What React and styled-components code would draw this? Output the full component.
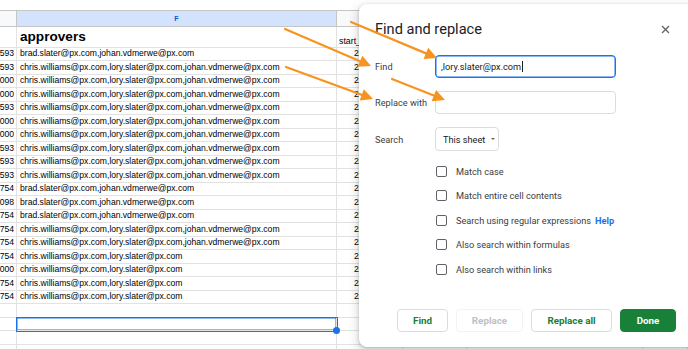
import styled, { createGlobalStyle } from "styled-components";

const GlobalStyle = createGlobalStyle`
  html, body { margin: 0; padding: 0; background: #fff; }
  body { width: 688px; height: 349px; overflow: hidden; }
  * { box-sizing: border-box; }
`;

const Page = styled.div`
  position: relative;
  width: 688px;
  height: 349px;
  overflow: hidden;
  background: #fff;
`;

/* ---------- spreadsheet ---------- */

const Sheet = styled.div`
  display: flex;
  flex-direction: column;
  font-family: "Liberation Sans", Arial, sans-serif;
  color: #000;
`;

const TopStrip = styled.div`
  height: 11px;
  border-bottom: 1px solid #c4c7c5;
`;

const Row = styled.div`
  display: grid;
  grid-template-columns: 17px 320px 66px 64px 176px 1fr;
  height: ${(p) => p.$h}px;
  flex: none;
`;

const Cell = styled.div`
  display: flex;
  align-items: ${(p) => (p.$bottom ? "flex-end" : "center")};
  justify-content: ${(p) => (p.$right ? "flex-end" : "flex-start")};
  padding: 0 2px 0 ${(p) => p.$indent || 3}px;
  border-right: 1px solid #e2e2e2;
  border-bottom: 1px solid #e2e2e2;
  overflow: ${(p) => (p.$selected ? "visible" : "hidden")};
  white-space: nowrap;
  font-size: ${(p) => p.$size || 8.6}px;
  font-weight: ${(p) => (p.$bold ? 700 : 400)};
  line-height: 1;
  position: relative;
  ${(p) => p.$selected && "box-shadow: 0 0 0 1px #1a73e8, inset 0 0 0 0.5px #1a73e8; z-index: 1;"}
`;

const HeadCell = styled.div`
  display: flex;
  align-items: center;
  justify-content: center;
  background: ${(p) => (p.$active ? "#d3e3fd" : "#f8f9fa")};
  border-right: 1px solid #c4c7c5;
  border-bottom: 1px solid #c4c7c5;
  font-size: 7px;
  font-weight: 700;
  color: ${(p) => (p.$active ? "#0b57d0" : "#444")};
`;

const FillHandle = styled.span`
  position: absolute;
  right: -4px;
  bottom: -4px;
  width: 7px;
  height: 7px;
  border-radius: 50%;
  background: #1a73e8;
`;

/* ---------- dialog ---------- */

const Dialog = styled.div`
  position: absolute;
  left: 359px;
  top: 4px;
  width: 345px;
  height: 343px;
  background: #fff;
  border-radius: 8px;
  box-shadow: 0 1px 3px rgba(60, 64, 67, 0.3), 0 4px 8px 3px rgba(60, 64, 67, 0.15);
  padding: 16px 0 0 16px;
  font-family: Roboto, "Liberation Sans", sans-serif;
  color: #3c4043;
  display: flex;
  flex-direction: column;
`;

const Header = styled.div`
  display: flex;
  align-items: center;
  justify-content: space-between;
  width: 300px;
  height: 18px;
`;

const Title = styled.h2`
  margin: 0;
  font-size: 14.6px;
  font-weight: 400;
  color: #202124;
  line-height: 18px;
`;

const Close = styled.button`
  width: 20px;
  height: 20px;
  border: 0;
  padding: 0;
  background: none;
  display: flex;
  align-items: center;
  justify-content: center;
`;

const Form = styled.div`
  display: grid;
  grid-template-columns: 60px 181px;
  row-gap: 13px;
  margin-top: 17px;
  align-items: center;
`;

const Label = styled.label`
  font-size: 9.2px;
  color: #3c4043;
`;

const Input = styled.div`
  height: 23px;
  border: 1px solid ${(p) => (p.$focused ? "#1a73e8" : "#dadce0")};
  border-radius: 4px;
  ${(p) => p.$focused && "box-shadow: inset 0 0 0 0.5px #1a73e8;"}
  display: flex;
  align-items: center;
  padding-left: 5px;
  font-size: 9.2px;
  color: #202124;
`;

const Caret = styled.span`
  display: inline-block;
  width: 1px;
  height: 11px;
  background: #202124;
  margin-left: 1px;
`;

const Select = styled.div`
  width: 64px;
  height: 24px;
  border: 1px solid #dadce0;
  border-radius: 4px;
  display: flex;
  align-items: center;
  padding-left: 7px;
  gap: 6px;
  font-size: 9.2px;
  color: #202124;
`;

const Arrow = styled.span`
  width: 0;
  height: 0;
  border-left: 2.5px solid transparent;
  border-right: 2.5px solid transparent;
  border-top: 2.5px solid #5f6368;
`;

const Options = styled.div`
  display: flex;
  flex-direction: column;
  margin: 8px 0 0 61px;
`;

const Option = styled.div`
  display: flex;
  align-items: center;
  height: 24.5px;
  gap: 9px;
  font-size: 9.2px;
  color: #3c4043;
`;

const Box = styled.span`
  width: 11px;
  height: 11px;
  border: 1.5px solid #5f6368;
  border-radius: 2px;
`;

const Help = styled.span`
  color: #1a73e8;
  font-weight: 700;
  margin-left: 4px;
`;

const Footer = styled.div`
  display: flex;
  justify-content: flex-end;
  gap: 8px;
  margin-top: 27px;
  width: 301px;
`;

const Button = styled.button`
  height: 23px;
  width: ${(p) => p.$w}px;
  border-radius: 4px;
  font-family: Roboto, "Liberation Sans", sans-serif;
  font-size: 9.8px;
  font-weight: 700;
  padding: 0;
  border: 1px solid ${(p) => (p.$primary ? "#188038" : p.disabled ? "#f1f3f4" : "#dadce0")};
  background: ${(p) => (p.$primary ? "#188038" : "#fff")};
  color: ${(p) => (p.$primary ? "#fff" : p.disabled ? "#bdc1c6" : "#188038")};
`;

/* ---------- arrows overlay ---------- */

const Overlay = styled.svg`
  position: absolute;
  inset: 0;
  pointer-events: none;
`;

const arrows = [
  [285, 29, 371, 66],
  [351, 22, 437, 58],
  [286, 67, 373, 99],
  [392, 79, 445, 100],
];

function Pointer({ x1, y1, x2, y2 }) {
  const dx = x2 - x1;
  const dy = y2 - y1;
  const len = Math.hypot(dx, dy);
  const ux = dx / len;
  const uy = dy / len;
  const bx = x2 - ux * 12;
  const by = y2 - uy * 12;
  const pts = `${x2},${y2} ${bx - uy * 6},${by + ux * 6} ${bx + uy * 6},${by - ux * 6}`;
  return (
    <g>
      <line x1={x1} y1={y1} x2={bx + ux * 2} y2={by + uy * 2} stroke="#f7931e" strokeWidth="2.2" strokeLinecap="round" />
      <polygon points={pts} fill="#f7931e" />
    </g>
  );
}

const A = "brad.slater@px.com,johan.vdmerwe@px.com";
const B = "chris.williams@px.com,lory.slater@px.com,johan.vdmerwe@px.com";
const C = "chris.williams@px.com,lory.slater@px.com";

const data = [
  ["10593", A], ["10593", B], ["12000", B], ["12000", B], ["10593", B],
  ["12000", B], ["12000", B], ["10593", B], ["10593", B], ["10593", B],
  ["11754", A], ["13098", A], ["11754", A], ["11754", B], ["11754", B],
  ["11754", C], ["12000", C], ["11754", C], ["11754", C],
];

const options = [
  "Match case",
  "Match entire cell contents",
  "Search using regular expressions",
  "Also search within formulas",
  "Also search within links",
];

export default function App() {
  return (
    <Page>
      <GlobalStyle />
      <Sheet>
        <TopStrip />
        <Row $h={16}>
          <HeadCell />
          <HeadCell $active>F</HeadCell>
          <HeadCell>G</HeadCell>
          <HeadCell>H</HeadCell>
          <HeadCell>I</HeadCell>
          <HeadCell>J</HeadCell>
        </Row>
        <Row $h={20.5}>
          <Cell />
          <Cell $bold $size={13.6}>approvers</Cell>
          <Cell $bottom $size={8.8} $indent={2} style={{ paddingBottom: 1 }}>start_date</Cell>
          <Cell />
          <Cell />
          <Cell />
        </Row>
        {data.map(([n, v], i) => (
          <Row key={i} $h={13.5}>
            <Cell $right>{n}</Cell>
            <Cell>{v}</Cell>
            <Cell $indent={17}>2/10/2022</Cell>
            <Cell />
            <Cell />
            <Cell />
          </Row>
        ))}
        {[0, 1, 2, 3].map((i) => (
          <Row key={"e" + i} $h={13.5}>
            <Cell />
            <Cell $selected={i === 1}>{i === 1 && <FillHandle />}</Cell>
            <Cell />
            <Cell />
            <Cell />
            <Cell />
          </Row>
        ))}
      </Sheet>

      <Dialog>
        <Header>
          <Title>Find and replace</Title>
          <Close aria-label="Close">
            <svg width="9" height="9" viewBox="0 0 9 9">
              <path d="M1 1L8 8M8 1L1 8" stroke="#5f6368" strokeWidth="1.3" />
            </svg>
          </Close>
        </Header>
        <Form>
          <Label>Find</Label>
          <Input $focused>
            ,lory.slater@px.com<Caret />
          </Input>
          <Label>Replace with</Label>
          <Input />
          <Label>Search</Label>
          <Select>
            This sheet <Arrow />
          </Select>
        </Form>
        <Options>
          {options.map((o) => (
            <Option key={o}>
              <Box />
              <span>
                {o}
                {o.startsWith("Search using") && <Help>Help</Help>}
              </span>
            </Option>
          ))}
        </Options>
        <Footer>
          <Button $w={51}>Find</Button>
          <Button $w={67} disabled>Replace</Button>
          <Button $w={81}>Replace all</Button>
          <Button $w={56} $primary>Done</Button>
        </Footer>
      </Dialog>

      <Overlay width="688" height="349" viewBox="0 0 688 349">
        {arrows.map(([x1, y1, x2, y2], i) => (
          <Pointer key={i} x1={x1} y1={y1} x2={x2} y2={y2} />
        ))}
      </Overlay>
    </Page>
  );
}
